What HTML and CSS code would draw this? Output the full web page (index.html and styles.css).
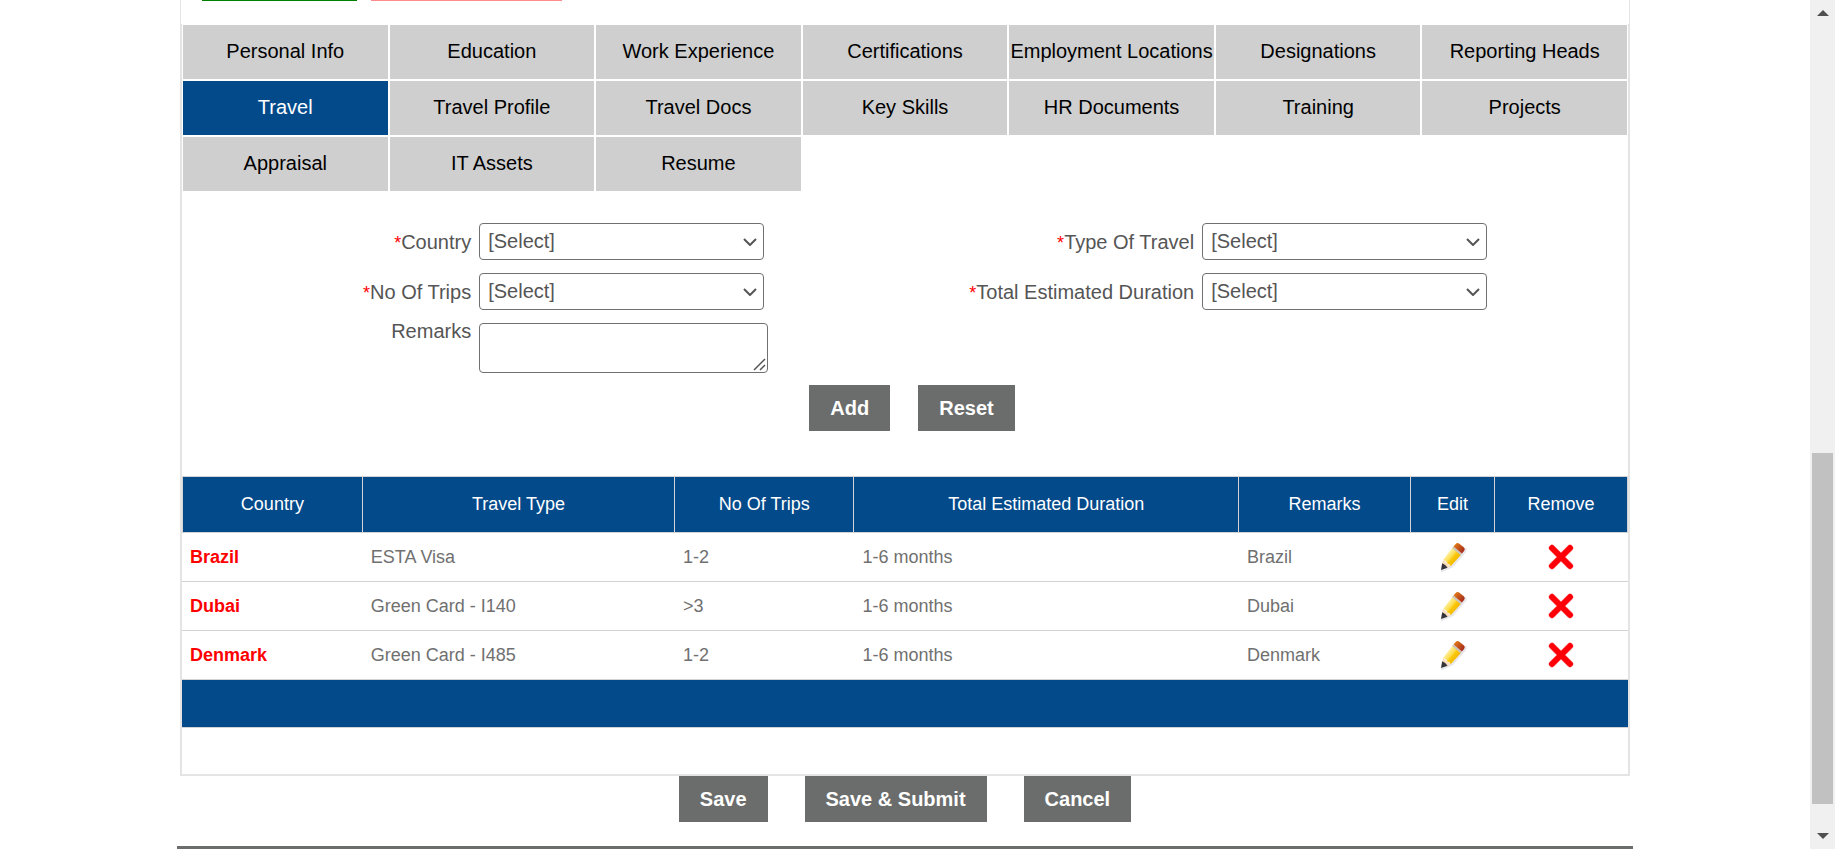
FILE: index.html
```
<!DOCTYPE html>
<html lang="en">
<head>
<meta charset="utf-8">
<title>Employee Profile - Travel</title>
<link rel="stylesheet" href="styles.css">
</head>
<body>
<svg class="defs" width="0" height="0" aria-hidden="true">
  <defs>
    <linearGradient id="wood" x1="0" y1="0" x2="1" y2="0">
      <stop offset="0" stop-color="#fff0a0"/>
      <stop offset="0.45" stop-color="#fbdc4a"/>
      <stop offset="0.6" stop-color="#fbc80a"/>
      <stop offset="1" stop-color="#f3b800"/>
    </linearGradient>
    <linearGradient id="rubber" x1="0" y1="0" x2="1" y2="0">
      <stop offset="0" stop-color="#e07818"/>
      <stop offset="1" stop-color="#a52a1c"/>
    </linearGradient>
    <symbol id="pencil" viewBox="0 0 28 32">
      <path d="M2 30 L13 25 L26 10 L26 7" fill="none" stroke="#e8e8ec" stroke-width="3" stroke-linejoin="round"/>
      <g transform="translate(2 29) rotate(40)">
        <path d="M0 0 L-5 -9 H5 Z" fill="#fbdcbc"/>
        <path d="M0 0 L-3.500 -6 Q0 -7 3.500 -6 Z" fill="#34343a"/>
        <path d="M-5 -9 L-5.500 -25 H5.500 L5 -9 Q3 -11 1 -9 Q-2 -11 -5 -9Z" fill="url(#wood)"/>
        <rect x="-5.500" y="-26" width="11" height="2" fill="#c9c2bd"/>
        <path d="M-5.500 -26 V-29 Q-5.500 -32 -2.500 -32 H2.500 Q5.500 -32 5.500 -29 V-26 Z" fill="url(#rubber)"/>
      </g>
    </symbol>
    <symbol id="cross" viewBox="0 0 26 26">
      <path d="M4 4 L22 22 M22 4 L4 22" fill="none" stroke="#ffd0d0" stroke-width="7" stroke-linecap="round"/>
      <path d="M4 4 L22 22 M22 4 L4 22" fill="none" stroke="#ff0009" stroke-width="6" stroke-linecap="round"/>
    </symbol>
    <symbol id="chevron" viewBox="0 0 14 8">
      <path d="M1 1 L7 7 L13 1" fill="none" stroke="#555" stroke-width="2"/>
    </symbol>
  </defs>
</svg>
<main class="page">
  <div class="sheet">
    <div class="status">
      <span class="chip chip-green"></span>
      <span class="chip chip-pink"></span>
    </div>
    <div class="panel">
      <nav class="tabs">
        <a href="#">Personal Info</a>
        <a href="#">Education</a>
        <a href="#">Work Experience</a>
        <a href="#">Certifications</a>
        <a href="#">Employment Locations</a>
        <a href="#">Designations</a>
        <a href="#">Reporting Heads</a>
        <a href="#" class="active">Travel</a>
        <a href="#">Travel Profile</a>
        <a href="#">Travel Docs</a>
        <a href="#">Key Skills</a>
        <a href="#">HR Documents</a>
        <a href="#">Training</a>
        <a href="#">Projects</a>
        <a href="#">Appraisal</a>
        <a href="#">IT Assets</a>
        <a href="#">Resume</a>
      </nav>
      <form class="travel-form">
        <div class="fields">
          <div class="field">
            <label for="country"><span class="req">*</span>Country</label>
            <div class="control"><select id="country"><option>[Select]</option></select><svg class="chevron"><use href="#chevron"/></svg></div>
          </div>
          <div class="field">
            <label for="type"><span class="req">*</span>Type Of Travel</label>
            <div class="control"><select id="type"><option>[Select]</option></select><svg class="chevron"><use href="#chevron"/></svg></div>
          </div>
          <div class="field">
            <label for="trips"><span class="req">*</span>No Of Trips</label>
            <div class="control"><select id="trips"><option>[Select]</option></select><svg class="chevron"><use href="#chevron"/></svg></div>
          </div>
          <div class="field">
            <label for="duration"><span class="req">*</span>Total Estimated Duration</label>
            <div class="control"><select id="duration"><option>[Select]</option></select><svg class="chevron"><use href="#chevron"/></svg></div>
          </div>
          <div class="field field-top">
            <label for="remarks">Remarks</label>
            <div class="control control-area"><textarea id="remarks"></textarea><svg class="grip" viewBox="0 0 13 13"><path d="M1 12 L12 1 M7 12 L12 7" fill="none" stroke="#555" stroke-width="1.500"/></svg></div>
          </div>
        </div>
        <div class="form-actions">
          <button type="button" class="btn">Add</button>
          <button type="reset" class="btn">Reset</button>
        </div>
      </form>
      <table class="trips">
        <colgroup>
          <col class="c-country"><col class="c-type"><col class="c-trips"><col class="c-duration"><col class="c-remarks"><col class="c-edit"><col>
        </colgroup>
        <thead>
          <tr><th>Country</th><th>Travel Type</th><th>No Of Trips</th><th>Total Estimated Duration</th><th>Remarks</th><th>Edit</th><th>Remove</th></tr>
        </thead>
        <tbody>
          <tr><td class="name">Brazil</td><td>ESTA Visa</td><td>1-2</td><td>1-6 months</td><td>Brazil</td>
            <td class="act"><button type="button" class="icon-btn" aria-label="Edit Brazil"><svg class="pencil"><use href="#pencil"/></svg></button></td>
            <td class="act"><button type="button" class="icon-btn" aria-label="Remove Brazil"><svg class="cross"><use href="#cross"/></svg></button></td></tr>
          <tr><td class="name">Dubai</td><td>Green Card - I140</td><td>&gt;3</td><td>1-6 months</td><td>Dubai</td>
            <td class="act"><button type="button" class="icon-btn" aria-label="Edit Dubai"><svg class="pencil"><use href="#pencil"/></svg></button></td>
            <td class="act"><button type="button" class="icon-btn" aria-label="Remove Dubai"><svg class="cross"><use href="#cross"/></svg></button></td></tr>
          <tr><td class="name">Denmark</td><td>Green Card - I485</td><td>1-2</td><td>1-6 months</td><td>Denmark</td>
            <td class="act"><button type="button" class="icon-btn" aria-label="Edit Denmark"><svg class="pencil"><use href="#pencil"/></svg></button></td>
            <td class="act"><button type="button" class="icon-btn" aria-label="Remove Denmark"><svg class="cross"><use href="#cross"/></svg></button></td></tr>
        </tbody>
        <tfoot>
          <tr><td colspan="7"></td></tr>
        </tfoot>
      </table>
    </div>
  </div>
  <div class="page-actions">
    <button type="button" class="btn">Save</button>
    <button type="button" class="btn">Save &amp; Submit</button>
    <button type="button" class="btn">Cancel</button>
  </div>
  <hr class="rule">
</main>
<div class="scrollbar" aria-hidden="true">
  <svg class="arrow" viewBox="0 0 12 6"><path d="M0 6 L6 0 L12 6 Z" fill="#505050"/></svg>
  <div class="track"><div class="thumb"></div></div>
  <svg class="arrow" viewBox="0 0 12 6"><path d="M0 0 L6 6 L12 0 Z" fill="#505050"/></svg>
</div>
</body>
</html>
```
FILE: styles.css
```
* {
  box-sizing: border-box;
}

body {
  margin: 0;
  height: 100vh;
  overflow: hidden;
  display: flex;
  background: #fff;
  color: #555;
  font-family: "Liberation Sans", Arial, sans-serif;
  font-size: 20px;
}

.defs {
  position: absolute;
}

.page {
  flex: 1;
  min-width: 0;
  padding: 0 177px;
}

.sheet {
  margin: 0 3px;
  border: 1px solid #e4e4e4;
  border-top: 0;
}

.status {
  display: flex;
  gap: 14px;
  height: 24px;
  padding: 0 21px;
}

.chip {
  height: 1px;
}

.chip-green {
  width: 155px;
  background: #008000;
}

.chip-pink {
  width: 191px;
  background: #ff8c8c;
}

.panel {
  border: 1px solid #e4e4e4;
  border-top: 0;
  padding-bottom: 46px;
}

.tabs {
  display: grid;
  grid-template-columns: repeat(7, 1fr);
  gap: 2px;
  padding: 1px;
}

.tabs a {
  height: 54px;
  padding-bottom: 2px;
  display: flex;
  align-items: center;
  justify-content: center;
  background: #cfcfcf;
  color: #000;
  text-decoration: none;
  white-space: nowrap;
}

.tabs a.active {
  background: #034a8b;
  color: #fff;
}

.travel-form {
  padding: 31px 0 45px;
}

.fields {
  display: grid;
  grid-template-columns: 1fr 1fr;
  row-gap: 13px;
}

.field {
  display: grid;
  grid-template-columns: 40% 1fr;
  column-gap: 8px;
  align-items: center;
}

.field label {
  text-align: right;
  line-height: 36px;
  height: 36px;
}

.field-top {
  align-items: start;
}

.field-top label {
  line-height: 16px;
}

.req {
  color: #f00;
  font-size: 18px;
}

.control {
  display: grid;
  align-items: center;
  width: 285px;
}

.control-area {
  width: 289px;
}

.control > * {
  grid-area: 1 / 1;
}

.control select {
  appearance: none;
  width: 100%;
  height: 37px;
  padding: 0 8px 2px;
  border: 1px solid #707070;
  border-radius: 4px;
  background: #fff;
  color: #555;
  font: inherit;
}

.chevron {
  width: 14px;
  height: 8px;
  justify-self: end;
  margin-right: 7px;
  pointer-events: none;
}

.control textarea {
  display: block;
  width: 100%;
  height: 50px;
  border: 1px solid #707070;
  border-radius: 4px;
  resize: none;
  font: inherit;
}

.grip {
  width: 13px;
  height: 13px;
  place-self: end;
  margin: 2px;
  pointer-events: none;
}

.form-actions {
  display: flex;
  justify-content: center;
  gap: 28px;
  padding: 12px 0 0 14px;
}

.btn {
  height: 46px;
  padding: 0 21px;
  border: 0;
  background: #6b6d6c;
  color: #fff;
  font: bold 20px "Liberation Sans", Arial, sans-serif;
}

.trips {
  width: 100%;
  table-layout: fixed;
  border-collapse: separate;
  border-spacing: 0;
  font-size: 18px;
  color: #707070;
}

.c-country {
  width: 12.5%;
}

.c-trips {
  width: 12.4%;
}

.c-type {
  width: 21.6%;
}

.c-duration {
  width: 26.6%;
}

.c-remarks {
  width: 11.9%;
}

.c-edit {
  width: 5.8%;
}

.trips th {
  height: 57px;
  padding: 0;
  background: #034a8b;
  color: #fff;
  font-weight: normal;
  border: 1px solid #d3d3d3;
  border-left: 0;
}

.trips th:first-child {
  border-left: 1px solid #d3d3d3;
}

.trips td {
  height: 49px;
  padding: 0 8px;
  border-bottom: 1px solid #d3d3d3;
}

.trips .name {
  color: #f00;
  font-weight: bold;
}

.trips .act {
  padding: 0;
  text-align: center;
}

.trips tfoot td {
  height: 48px;
  background: #034a8b;
}

.icon-btn {
  display: block;
  margin: 0 auto;
  padding: 0;
  border: 0;
  background: none;
}

.icon-btn svg {
  display: block;
}

.pencil {
  width: 28px;
  height: 32px;
}

.cross {
  width: 26px;
  height: 26px;
}

.page-actions {
  display: flex;
  justify-content: center;
  gap: 37px;
}

.rule {
  height: 4px;
  margin: 24px 0 0;
  border: 0;
  background: #6b6d6c;
}

.scrollbar {
  width: 25px;
  display: flex;
  flex-direction: column;
  align-items: center;
  padding: 10px 0;
  background: #f0f0f0;
}

.arrow {
  width: 12px;
  height: 6px;
}

.track {
  flex: 1;
  display: flex;
  flex-direction: column;
  justify-content: flex-end;
  padding-bottom: 29px;
}

.thumb {
  width: 21px;
  height: 44.5%;
  background: #c1c1c1;
}
```
